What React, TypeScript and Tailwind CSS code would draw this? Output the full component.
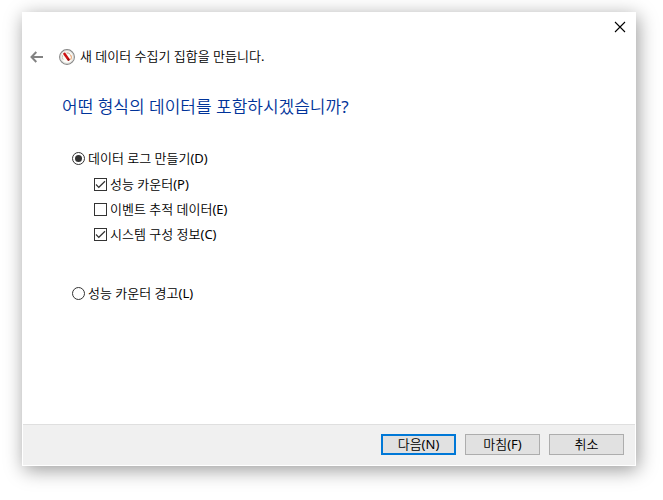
import { InputHTMLAttributes, useState } from "react";

import clsx from "clsx";

type ChoiceProps = InputHTMLAttributes<HTMLInputElement> & {
  label: string;
};

const RadioChoice = ({ label, ...props }: ChoiceProps) => {
  return (
    <label className="flex w-fit items-center gap-[3px] leading-4">
      <span className="grid size-[13px] place-items-center">
        <input
          type="radio"
          className="peer col-start-1 row-start-1 size-[13px] appearance-none rounded-full border border-[#333333] bg-white"
          {...props}
        />
        <span className="pointer-events-none col-start-1 row-start-1 hidden size-[7px] rounded-full bg-[#333333] peer-checked:block" />
      </span>
      {label}
    </label>
  );
};

const CheckChoice = ({ label, ...props }: ChoiceProps) => {
  return (
    <label className="flex w-fit items-center gap-[3px] leading-4">
      <span className="grid size-[13px] place-items-center">
        <input
          type="checkbox"
          className="peer col-start-1 row-start-1 size-[13px] appearance-none border border-[#333333] bg-white"
          {...props}
        />
        <svg
          viewBox="0 0 13 13"
          className="pointer-events-none col-start-1 row-start-1 hidden size-[13px] peer-checked:block"
          fill="none"
          stroke="#333333"
          strokeWidth="1.2"
        >
          <path d="M2 6.5 4.8 9.3 11 3.2" />
        </svg>
      </span>
      {label}
    </label>
  );
};

type WizardButtonProps = {
  label: string;
  primary?: boolean;
};

const WizardButton = ({ label, primary }: WizardButtonProps) => {
  return (
    <button
      type="button"
      className={clsx(
        "flex h-[21px] w-[75px] items-center justify-center bg-[#e1e1e1]",
        primary ? "border-2 border-[#0078d7]" : "border border-[#adadad]"
      )}
    >
      {label}
    </button>
  );
};

const GaugeIcon = () => {
  return (
    <svg viewBox="0 0 16 16" className="size-4" fill="none" aria-hidden="true">
      <circle cx="8" cy="8" r="7.4" fill="#fdfcf8" stroke="#858585" strokeWidth="1.1" />
      <circle cx="8" cy="8" r="6.4" stroke="#cfcfcb" strokeWidth="0.9" />
      <path d="M4.2 10.8A4.7 4.7 0 0 1 3.7 6.2" stroke="#c3c8b4" />
      <path d="M7.6 3.9a4.5 4.5 0 0 1 3.6 1.4" stroke="#a9a48e" />
      <path d="M11.6 5.8a4.7 4.7 0 0 1 0.1 5" stroke="#e5935a" />
      <path d="M4.9 4 10 11.2" stroke="#cc1111" strokeWidth="2.5" />
      <path d="M9 9.8 10.2 11.5" stroke="#8c1010" strokeWidth="1.6" />
    </svg>
  );
};

const App = () => {
  const [mode, setMode] = useState("log");

  return (
    <div className="flex min-h-screen bg-white pt-3 pr-[27px] pb-[34px] pl-[22px] font-['Noto_Sans','Noto_Sans_CJK_KR_DemiLight','Noto_Sans_CJK_KR',sans-serif] text-[13px] text-black">
      <div className="flex flex-1 flex-col bg-white px-px pb-px shadow-[2px_4px_18px_rgba(0,0,0,0.4)]">
        <div className="flex h-[30px] items-center justify-end pr-[9px]">
          <button type="button" aria-label="닫기">
            <svg viewBox="0 0 12 12" className="size-3" stroke="#000000" strokeWidth="1.1">
              <path d="M1 1 11 11M11 1 1 11" />
            </svg>
          </button>
        </div>

        <header className="flex h-[30px] items-center pl-[7px]">
          <button type="button" aria-label="뒤로" className="mr-4">
            <svg viewBox="0 0 13 12" className="h-3 w-[13px]" fill="none" stroke="#838383" strokeWidth="2">
              <path d="M6.3 1 1.5 6l4.8 5M1.5 6H13" />
            </svg>
          </button>
          <GaugeIcon />
          <span className="ml-[5px]">새 데이터 수집기 집합을 만듭니다.</span>
        </header>

        <main className="flex-1 px-[39px] pt-[23px]">
          <h1 className="text-[17px] leading-6 text-[#003399]">
            어떤 형식의 데이터를 포함하시겠습니까?
          </h1>

          <div className="mt-[31px] pl-[10px]">
            <RadioChoice
              name="mode"
              label="데이터 로그 만들기(D)"
              checked={mode === "log"}
              onChange={() => setMode("log")}
            />
            <div className="mt-[10px] mb-[43px] flex flex-col gap-[9px] pl-[22px]">
              <CheckChoice label="성능 카운터(P)" defaultChecked />
              <CheckChoice label="이벤트 추적 데이터(E)" />
              <CheckChoice label="시스템 구성 정보(C)" defaultChecked />
            </div>
            <RadioChoice
              name="mode"
              label="성능 카운터 경고(L)"
              checked={mode === "alert"}
              onChange={() => setMode("alert")}
            />
          </div>
        </main>

        <footer className="flex justify-end gap-[9px] border-t border-[#dfdfdf] bg-[#f0f0f0] pt-[9px] pr-[11px] pb-[10px]">
          <WizardButton label="다음(N)" primary />
          <WizardButton label="마침(F)" />
          <WizardButton label="취소" />
        </footer>
      </div>
    </div>
  );
};

export default App;
